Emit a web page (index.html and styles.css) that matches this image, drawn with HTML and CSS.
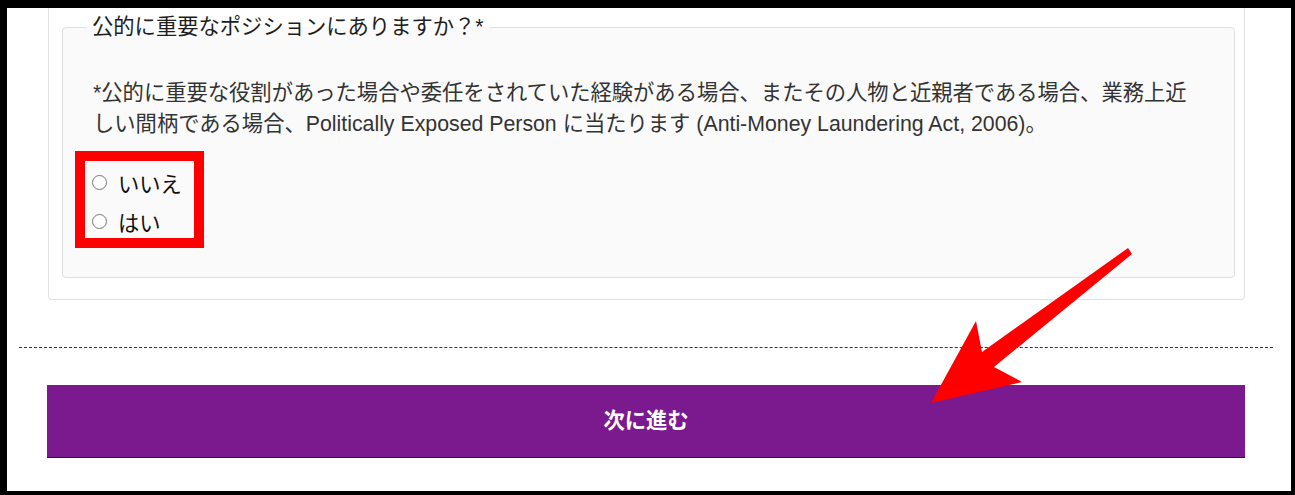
FILE: index.html
```html
<!DOCTYPE html>
<html lang="ja">
<head>
<meta charset="utf-8">
<title>公的に重要なポジション</title>
<link rel="stylesheet" href="styles.css">
</head>
<body>
<div class="frame">
  <div class="card">
    <fieldset class="question">
      <legend class="question-title">公的に重要なポジションにありますか？*</legend>
      <p class="note">*公的に重要な役割があった場合や委任をされていた経験がある場合、またその人物と近親者である場合、業務上近しい間柄である場合、Politically Exposed Person に当たります (Anti-Money Laundering Act, 2006)。</p>
      <div class="options">
        <label class="option"><input type="radio" name="pep" class="radio"><span>いいえ</span></label>
        <label class="option"><input type="radio" name="pep" class="radio"><span>はい</span></label>
      </div>
    </fieldset>
  </div>
  <div class="divider"></div>
  <button class="next-btn" type="button">次に進む</button>

  <div class="highlight"></div>
  <svg class="arrow" viewBox="7 8 1284 483" width="1284" height="483" aria-hidden="true">
    <polygon points="1128,248 1132,254 994,367 1022,382 931,403 976,321 982,352" fill="#ff0000"/>
  </svg>
</div>
</body>
</html>
```
FILE: styles.css
```css
html, body {
  margin: 0;
  padding: 0;
  background: #fff;
}

.frame {
  box-sizing: border-box;
  width: 1295px;
  height: 495px;
  border-style: solid;
  border-color: #000;
  border-width: 8px 4px 4px 7px;
  background: #fff;
  position: relative;
  overflow: hidden;
  font-family: "Liberation Sans", "Noto Sans CJK JP", sans-serif;
}

.card {
  box-sizing: border-box;
  width: 1197px;
  margin-left: 41px;
  border: 1px solid #e2e2e2;
  border-top: none;
  border-radius: 0 0 4px 4px;
  padding: 4px 9px 21px 13px;
  background: #fff;
}

.question {
  margin: 0;
  min-width: 0;
  border: 1px solid #e0e0e0;
  border-radius: 4px;
  background: #fafafa;
  padding: 36px 30px 36px 30px;
}

.question-title {
  font-size: 21.3px;
  line-height: 30px;
  color: #1e1e1e;
  padding: 0 6px;
  margin-left: -7px;
}

.note {
  margin: 0;
  font-size: 21.3px;
  line-height: 30.5px;
  color: #333;
}

.options {
  margin-top: 24px;
  display: flex;
  flex-direction: column;
}

.option {
  display: flex;
  align-items: center;
  height: 39px;
  font-size: 21.3px;
  color: #111;
}

.radio {
  appearance: none;
  -webkit-appearance: none;
  box-sizing: border-box;
  width: 15px;
  height: 15px;
  margin: 0 11px 0 -1px;
  border: 1px solid #777;
  border-radius: 50%;
  background: #fff;
}

.divider {
  margin: 47px 18px 0 12px;
  border-top: 1px dashed #3b2a55;
}

.next-btn {
  display: block;
  box-sizing: border-box;
  width: 1198px;
  height: 73px;
  margin: 37px 0 0 40px;
  padding: 0;
  border: none;
  border-bottom: 1px solid #3d0a4a;
  background: #7b1a8e;
  color: #fff;
  font-family: "Liberation Sans", "Noto Sans CJK JP", sans-serif;
  font-weight: 700;
  font-size: 21.3px;
  line-height: 72px;
  text-align: center;
}

.highlight {
  position: absolute;
  left: 68px;
  top: 143px;
  width: 129px;
  height: 97px;
  box-sizing: border-box;
  border: 10px solid #ff0000;
}

.arrow {
  position: absolute;
  left: 0;
  top: 0;
}
```
